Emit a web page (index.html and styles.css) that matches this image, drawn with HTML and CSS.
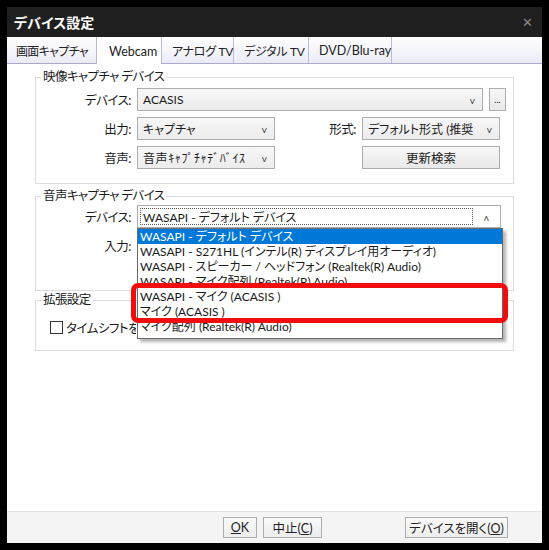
FILE: index.html
```html
<!DOCTYPE html>
<html lang="ja">
<head>
    <meta charset="UTF-8">
    <title>デバイス設定</title>
    <link rel="stylesheet" href="styles.css">
</head>
<body>
    <div class="window">
        <div class="titlebar">
            <span class="title">デバイス設定</span>
            <span class="close">✕</span>
        </div>

        <div class="tabs">
            <div class="tab">画面キャプチャ</div>
            <div class="tab active">Webcam</div>
            <div class="tab">アナログ TV</div>
            <div class="tab">デジタル TV</div>
            <div class="tab">DVD/Blu-ray</div>
        </div>

        <div class="panel">
            <fieldset class="group video">
                <legend>映像キャプチャ デバイス</legend>
                <div class="rows">
                    <div class="row">
                        <label class="lbl">デバイス:</label>
                        <div class="combo wide"><span>ACASIS</span><span class="arrow">v</span></div>
                        <button class="btn dots">...</button>
                    </div>
                    <div class="row">
                        <label class="lbl">出力:</label>
                        <div class="combo"><span>キャプチャ</span><span class="arrow">v</span></div>
                        <label class="lbl mid">形式:</label>
                        <div class="combo"><span>デフォルト形式 (推奨</span><span class="arrow">v</span></div>
                    </div>
                    <div class="row">
                        <label class="lbl">音声:</label>
                        <div class="combo"><span class="half">音声ｷｬﾌﾟﾁｬﾃﾞﾊﾞｲｽ</span><span class="arrow">v</span></div>
                        <span class="mid"></span>
                        <button class="btn refresh">更新検索</button>
                    </div>
                </div>
            </fieldset>

            <fieldset class="group audio">
                <legend>音声キャプチャ デバイス</legend>
                <div class="rows">
                    <div class="row">
                        <label class="lbl">デバイス:</label>
                        <div class="combo open">
                            <span class="focus">WASAPI - デフォルト デバイス</span>
                            <span class="arrow">ʌ</span>
                            <ul class="dropdown">
                                <li class="selected">WASAPI - デフォルト デバイス</li>
                                <li>WASAPI - S271HL (インテル(R) ディスプレイ用オーディオ)</li>
                                <li>WASAPI - スピーカー / ヘッドフォン (Realtek(R) Audio)</li>
                                <li>WASAPI - マイク配列 (Realtek(R) Audio)</li>
                                <li>WASAPI - マイク (ACASIS )</li>
                                <li>マイク (ACASIS )</li>
                                <li>マイク配列 (Realtek(R) Audio)</li>
                                <div class="mark"></div>
                            </ul>
                        </div>
                    </div>
                    <div class="row">
                        <label class="lbl">入力:</label>
                    </div>
                </div>
            </fieldset>

            <fieldset class="group ext">
                <legend>拡張設定</legend>
                <div class="check-row">
                    <span class="checkbox"></span>
                    <span class="check-text">タイムシフトを有効にする</span>
                </div>
            </fieldset>
        </div>

        <div class="footer">
            <button class="btn ok"><u>O</u>K</button>
            <button class="btn cancel">中止(<u>C</u>)</button>
            <span class="fill"></span>
            <button class="btn open-dev">デバイスを開く(<u>O</u>)</button>
        </div>
    </div>
</body>
</html>
```

FILE: styles.css
```css
* {
    box-sizing: border-box;
}
body {
    margin: 0;
    background: #000;
    font-family: Lato, "Noto Sans CJK JP", sans-serif;
    font-size: 12px;
    color: #1a1a1a;
    font-feature-settings: "palt";
}
.window {
    margin: 7px;
    width: 535px;
    height: 536px;
    background: #fff;
    display: flex;
    flex-direction: column;
}
.titlebar {
    height: 30px;
    background: #1f1f1f;
    display: flex;
    align-items: center;
    padding: 0 9px 0 7px;
}
.title {
    color: #fff;
    font-size: 14px;
    font-weight: bold;
    flex: 1;
}
.close {
    color: #8a8a8a;
    font-size: 13px;
}
.tabs {
    height: 27px;
    display: flex;
    background: linear-gradient(#ffffff, #ebebf7);
    border-bottom: 1px solid #a9a9c9;
}
.tab {
    flex-shrink: 0;
    padding: 0 0 0 10px;
    display: flex;
    align-items: center;
    white-space: nowrap;
    font-size: 12px;
    letter-spacing: -0.7px;
    border-right: 1px solid #b9b9d9;
    color: #222;
}
.tab:first-child {
    width: 90px;
    padding-left: 9px;
}
.tab.active {
    background: #fff;
    margin-bottom: -1px;
    padding: 2px 0 0 12px;
    width: 65px;
    font-size: 12.5px;
    letter-spacing: 0;
}
.tab:nth-child(3) { width: 72px; letter-spacing: -0.3px; }
.tab:nth-child(4) { width: 75px; letter-spacing: -0.3px; }
.tab:nth-child(5) { width: 83px; font-size: 12.5px; letter-spacing: 0; }
.panel {
    flex: 1;
    padding: 5px 28px 0;
}
.group {
    margin: 0;
    padding: 0;
    border: 1px solid #dcdcdc;
}
.group legend {
    margin-left: 5px;
    padding: 0 2px;
    line-height: 16px;
    font-size: 12.5px;
    letter-spacing: -0.6px;
}
.rows {
    display: flex;
    flex-direction: column;
    gap: 6px;
    padding: 3px 0 14px;
}
.row {
    display: flex;
    align-items: center;
    height: 23px;
}
.lbl {
    flex-shrink: 0;
    width: 101px;
    text-align: right;
    padding-right: 6px;
    font-size: 12.5px;
    letter-spacing: -0.5px;
}
.lbl.mid,
.mid {
    width: 87px;
    flex-shrink: 0;
}
.fill {
    flex: 1;
}
.combo {
    position: relative;
    flex-shrink: 0;
    width: 138px;
    height: 23px;
    border: 1px solid #adadad;
    background: linear-gradient(#f7f7f7, #ececec);
    display: flex;
    align-items: center;
    padding: 0 7px 0 5px;
    white-space: nowrap;
}
.combo span:first-child {
    flex: 1;
    overflow: hidden;
}
.combo.wide {
    width: 346px;
}
.arrow {
    font-size: 10px;
    color: #444;
    padding-left: 4px;
}
.half {
    font-feature-settings: normal;
    letter-spacing: 0.6px;
}
.btn {
    font: inherit;
    font-size: 12px;
    height: 23px;
    border: 1px solid #adadad;
    background: linear-gradient(#f7f7f7, #e9e9e9);
    color: #222;
    padding: 0;
    white-space: nowrap;
}
.dots {
    flex-shrink: 0;
    width: 17px;
    margin-left: 6px;
    font-size: 9px;
}
.refresh {
    flex-shrink: 0;
    width: 138px;
    font-size: 12.5px;
}
.group.audio {
    margin-top: 4px;
}
.audio .rows {
    padding: 1px 0 33px;
}
.combo.open {
    width: 364px;
    background: #fff;
    padding: 2px;
}
.focus {
    height: 100%;
    border: 1px dotted #555;
    padding-left: 2px;
    display: flex;
    align-items: center;
}
.combo.open .arrow {
    padding: 0 9px 0 11px;
}
.dropdown {
    position: absolute;
    top: 22px;
    left: -1px;
    width: 366px;
    margin: 0;
    padding: 0 0 4px;
    list-style: none;
    background: #fff;
    border: 1px solid #6b6b6b;
    box-shadow: 3px 3px 3px rgba(0, 0, 0, 0.3);
    z-index: 2;
}
.dropdown li {
    height: 15px;
    line-height: 15px;
    padding-left: 2px;
    overflow: hidden;
}
.dropdown li.selected {
    background: #0078d7;
    color: #fff;
}
.mark {
    position: absolute;
    left: -7px;
    top: 54px;
    width: 377px;
    height: 40px;
    border: 5px solid #f20d0d;
    border-radius: 7px;
}
.group.ext {
    margin-top: 1px;
}
.check-row {
    display: flex;
    align-items: center;
    gap: 3px;
    padding: 10px 0 13px 14px;
    font-size: 12.5px;
    letter-spacing: -0.5px;
}
.checkbox {
    flex-shrink: 0;
    width: 13px;
    height: 13px;
    border: 1px solid #333;
    background: #fff;
}
.check-text {
    width: 70px;
    white-space: nowrap;
    overflow: hidden;
}
.footer {
    height: 32px;
    border-top: 1px solid #e3e3e3;
    background: #f4f4f4;
    display: flex;
    align-items: center;
    padding: 0 34px 0 216px;
    gap: 6px;
}
.footer .btn {
    height: 21px;
    background: linear-gradient(#fafafa, #ededed);
    font-size: 12.5px;
}
.ok {
    width: 34px;
}
.cancel {
    width: 59px;
}
.open-dev {
    width: 103px;
}
```
